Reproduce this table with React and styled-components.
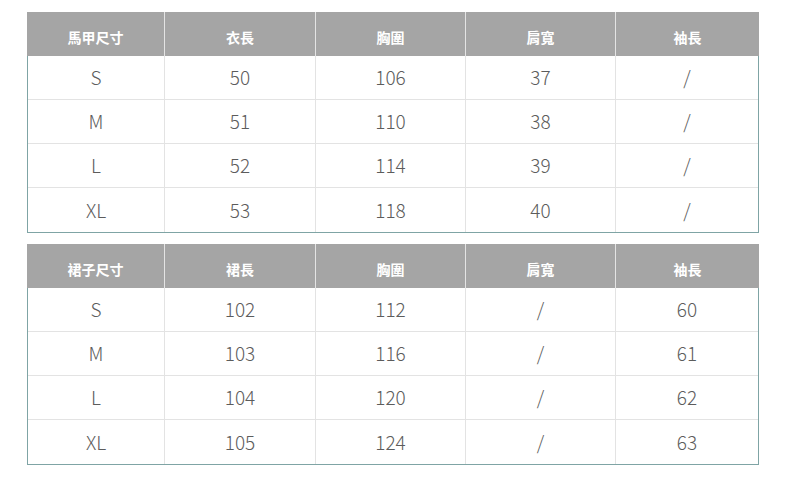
import React from "react";
import styled, { createGlobalStyle } from "styled-components";

const GlobalStyle = createGlobalStyle`
  body {
    margin: 0;
    background: #ffffff;
    font-family: "Noto Sans CJK TC", "Noto Sans", sans-serif;
  }
`;

const tables = [
  {
    head: ["馬甲尺寸", "衣長", "胸圍", "肩寬", "袖長"],
    rows: [
      ["S", "50", "106", "37", "/"],
      ["M", "51", "110", "38", "/"],
      ["L", "52", "114", "39", "/"],
      ["XL", "53", "118", "40", "/"],
    ],
  },
  {
    head: ["裙子尺寸", "裙長", "胸圍", "肩寬", "袖長"],
    rows: [
      ["S", "102", "112", "/", "60"],
      ["M", "103", "116", "/", "61"],
      ["L", "104", "120", "/", "62"],
      ["XL", "105", "124", "/", "63"],
    ],
  },
];

const App = () => {
  return (
    <Page>
      <GlobalStyle />
      {tables.map((table, t) => (
        <SizeTable key={t}>
          <HeadRow>
            {table.head.map((label, i) => (
              <HeadCell key={i}>{label}</HeadCell>
            ))}
          </HeadRow>
          <Body>
            {table.rows.map((row, r) => (
              <Row key={r} last={r === table.rows.length - 1}>
                {row.map((value, i) => (
                  <Cell key={i}>{value}</Cell>
                ))}
              </Row>
            ))}
          </Body>
        </SizeTable>
      ))}
    </Page>
  );
};

export default App;

const Page = styled.div`
  display: flex;
  flex-direction: column;
  gap: 11px;
  padding: 12px 0 0 27px;
  width: 732px;
`;

const SizeTable = styled.div`
  display: flex;
  flex-direction: column;
`;

const HeadRow = styled.div`
  display: grid;
  grid-template-columns: 137px 151px 150px 150px 1fr;
  height: 44px;
  background: #a5a5a5;
`;

const HeadCell = styled.div`
  display: flex;
  align-items: center;
  justify-content: center;
  padding-top: 5px;
  box-sizing: border-box;
  color: #ffffff;
  font-size: 14px;
  font-weight: 700;
  border-left: 1px solid #e4e4e4;

  &:first-child {
    border-left: none;
  }
`;

const Body = styled.div`
  border: 1px solid #7fa4a5;
  border-top: none;
`;

const Row = styled.div`
  display: grid;
  grid-template-columns: 136px 151px 150px 150px 1fr;
  height: ${(props) => (props.last ? "44px" : "43px")};
  border-bottom: ${(props) => (props.last ? "none" : "1px solid #e3e3e3")};
`;

const Cell = styled.div`
  display: flex;
  align-items: center;
  justify-content: center;
  padding-bottom: 2px;
  box-sizing: border-box;
  color: #5c5c5c;
  font-size: 19px;
  font-weight: 300;
  border-left: 1px solid #e3e3e3;

  &:first-child {
    border-left: none;
  }
`;
